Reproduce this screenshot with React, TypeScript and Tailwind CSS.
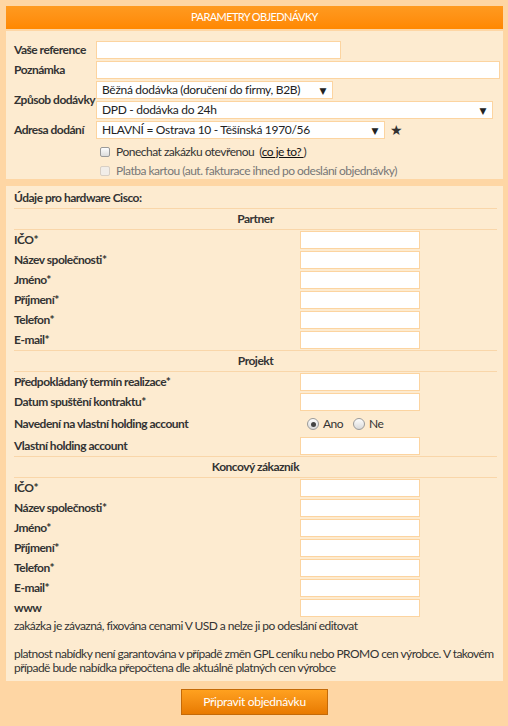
import React from 'react';

const font = { fontFamily: 'Lato, "Open Sans", "DejaVu Sans", sans-serif' };

function TextBox({ className = '' }: { className?: string }) {
  return <div className={`h-[18px] bg-white border border-[#fcd4a0] ${className}`} />;
}

function FakeSelect({ text, className = '' }: { text: string; className?: string }) {
  return (
    <div className={`h-[18px] bg-white border border-[#fcd4a0] flex items-center justify-between pl-[5px] pr-[6px] text-[12px] text-[#222] tracking-[-0.3px] ${className}`}>
      <span className="whitespace-nowrap">{text}</span>
      <span className="text-[9px] leading-none">▼</span>
    </div>
  );
}

function Checkbox({ disabled }: { disabled?: boolean }) {
  return (
    <span
      className={`inline-block w-[10px] h-[10px] rounded-[2px] border ${
        disabled ? 'border-[#d8cfc4] bg-[#f1ede8]' : 'border-[#9a9a9a] bg-gradient-to-b from-[#fdfdfd] to-[#dcdcdc]'
      }`}
    />
  );
}

function Radio({ checked }: { checked?: boolean }) {
  return (
    <span className="w-[12px] h-[12px] rounded-full border border-[#9a9a9a] bg-gradient-to-b from-[#fdfdfd] to-[#d9d9d9] flex items-center justify-center">
      {checked && <span className="w-[5px] h-[5px] rounded-full bg-[#444]" />}
    </span>
  );
}

function Row({ label, h = 'h-[20px]', children }: { label: string; h?: string; children?: React.ReactNode }) {
  return (
    <div className={`flex items-center ${h}`}>
      <div className="w-[286px] font-bold text-[#333]">{label}</div>
      {children ?? <TextBox className="w-[120px]" />}
    </div>
  );
}

function GroupTitle({ children }: { children: string }) {
  return (
    <div className="h-[21px] border-b border-[#f9d6a9] flex items-center justify-center font-bold text-[#333]">
      {children}
    </div>
  );
}

const partner = ['IČO*', 'Název společnosti*', 'Jméno*', 'Příjmení*', 'Telefon*', 'E-mail*'];
const customer = [...partner, 'www'];

export default function App() {
  return (
    <div className="min-h-[726px] bg-[#fed6a4] pl-[6px] pr-[5px] pt-[6px] pb-[9px] tracking-[-0.5px]" style={font}>
      <div className="h-[23px] bg-gradient-to-b from-[#ff9a1f] to-[#ff8800] flex items-center justify-center text-white text-[11px] uppercase tracking-[-0.6px]">
        Parametry objednávky
      </div>

      <div className="mt-[2px] h-[148px] bg-[#fdebd0] pl-[8px] pt-[10px] text-[12px] text-[#333]">
        <div className="flex flex-col gap-[2px]">
          <div className="flex items-center">
            <div className="w-[82px] font-bold whitespace-nowrap">Vaše reference</div>
            <TextBox className="w-[245px]" />
          </div>
          <div className="flex items-center">
            <div className="w-[82px] font-bold whitespace-nowrap">Poznámka</div>
            <TextBox className="w-[404px]" />
          </div>
          <div className="flex items-center">
            <div className="w-[82px] font-bold whitespace-nowrap">Způsob dodávky</div>
            <div className="flex flex-col gap-[2px]">
              <FakeSelect text="Běžná dodávka (doručení do firmy, B2B)" className="w-[237px]" />
              <FakeSelect text="DPD - dodávka do 24h" className="w-[397px]" />
            </div>
          </div>
          <div className="flex items-center">
            <div className="w-[82px] font-bold whitespace-nowrap">Adresa dodání</div>
            <FakeSelect text="HLAVNÍ = Ostrava 10 - Těšínská 1970/56" className="w-[289px]" />
            <span className="ml-[5px] text-[14px] leading-none text-[#333]">★</span>
          </div>
        </div>
        <div className="pl-[86px] mt-[3px] flex flex-col">
          <div className="flex items-center gap-[6px] h-[19px]">
            <Checkbox />
            <span>
              Ponechat zakázku otevřenou&nbsp; (<span className="underline text-[#111]">co je to? </span>)
            </span>
          </div>
          <div className="flex items-center gap-[6px] h-[19px] text-[#777]">
            <Checkbox disabled />
            <span>Platba kartou (aut. fakturace ihned po odeslání objednávky)</span>
          </div>
        </div>
      </div>

      <div className="mt-[7px] bg-[#fdebd0] pl-[8px] pr-[6px] pt-[2px] pb-[6px] text-[12px] text-[#333]">
        <div className="h-[21px] border-b border-[#f9d6a9] flex items-center font-bold">Údaje pro hardware Cisco:</div>
        <GroupTitle>Partner</GroupTitle>
        {partner.map((l) => (
          <Row key={'p' + l} label={l} />
        ))}
        <div className="border-t border-[#f9d6a9]" />
        <GroupTitle>Projekt</GroupTitle>
        <Row label="Předpokládaný termín realizace*" />
        <Row label="Datum spuštění kontraktu*" />
        <Row label="Navedení na vlastní holding account" h="h-[24px]">
          <div className="flex items-center pl-[7px]">
            <Radio checked />
            <span className="ml-[4px]">Ano</span>
            <span className="ml-[10px]">
              <Radio />
            </span>
            <span className="ml-[4px]">Ne</span>
          </div>
        </Row>
        <Row label="Vlastní holding account" />
        <div className="border-t border-[#f9d6a9]" />
        <GroupTitle>Koncový zákazník</GroupTitle>
        {customer.map((l) => (
          <Row key={'c' + l} label={l} />
        ))}
        <div className="leading-[14px] mt-[1px] tracking-[-0.55px]">
          <p>zakázka je závazná, fixována cenami V USD a nelze ji po odeslání editovat</p>
          <p className="mt-[14px]">
            platnost nabídky není garantována v případě změn GPL ceníku nebo PROMO cen výrobce. V takovém případě bude
            nabídka přepočtena dle aktuálně platných cen výrobce
          </p>
        </div>
      </div>

      <div className="mt-[8px] flex justify-center">
        <button className="w-[147px] h-[26px] border border-[#c46a08] bg-gradient-to-b from-[#ffa11f] to-[#e87a00] text-white text-[12px] tracking-[-0.3px]">
          Připravit objednávku
        </button>
      </div>
    </div>
  );
}
